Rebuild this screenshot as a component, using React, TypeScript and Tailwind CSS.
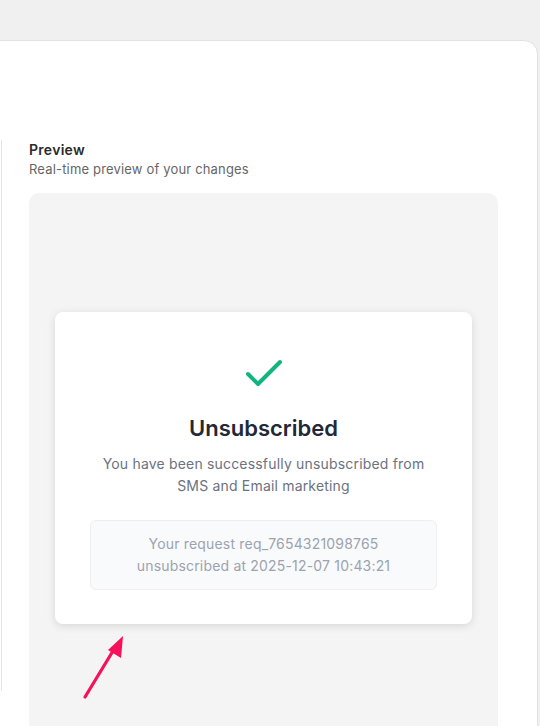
import React from "react";

// ---------------- UNSUBSCRIBE PREVIEW ----------------
const App: React.FC = () => {
  return (
    <div
      className="relative h-[726px] w-[540px] overflow-hidden bg-[#f0f0f0] pt-[40px] pr-[2px]"
      style={{ fontFamily: "Inter, 'Noto Sans', sans-serif" }}
    >
      {/* settings panel, left part is cut off */}
      <div className="ml-[-20px] h-[720px] rounded-tr-[14px] border border-[#e2e2e2] bg-white pt-[99px]">
        <div className="flex items-start">
          <div className="h-[551px] w-[21px] shrink-0 border-r border-[#e4e4e4]"></div>

          <div className="flex-1 pl-[27px] pr-[39px]">
            <h3 className="text-[14px] font-semibold leading-[20px] tracking-[0.02em] text-[#2b2b2b]">
              Preview
            </h3>
            <p className="text-[13px] leading-[18px] tracking-[0.013em] text-[#666666]">
              Real-time preview of your changes
            </p>

            {/* preview canvas */}
            <div className="mt-[15px] flex h-[560px] items-start rounded-[10px] bg-[#f4f4f4] px-[26px] pt-[119px]">
              <div className="w-full rounded-[8px] bg-white px-[35px] pt-[38px] pb-[34px] text-center shadow-[0_2px_8px_rgba(0,0,0,0.12)]">
                <svg
                  width="48"
                  height="48"
                  viewBox="0 0 24 24"
                  fill="none"
                  stroke="#12b57f"
                  strokeWidth="2"
                  strokeLinecap="round"
                  strokeLinejoin="round"
                  className="mx-auto"
                >
                  <path d="M20 6 9 17l-5-5" />
                </svg>
                <h2 className="mt-[16px] text-[22px] font-semibold leading-[28px] text-[#1f2937]">
                  Unsubscribed
                </h2>
                <p className="mt-[11px] text-[14px] leading-[22px] tracking-[0.013em] text-[#6b7280]">
                  You have been successfully unsubscribed from
                  <br />
                  SMS and Email marketing
                </p>
                <div className="mt-[23px] rounded-[6px] border border-[#eceef1] bg-[#f9fafb] py-[12px] text-[14px] leading-[22px] tracking-[0.013em] text-[#9ca3af]">
                  Your request req_7654321098765
                  <br />
                  unsubscribed at 2025-12-07 10:43:21
                </div>
              </div>
            </div>
          </div>
        </div>
      </div>

      {/* annotation arrow */}
      <svg
        className="absolute left-[78px] top-[630px]"
        width="52"
        height="74"
        viewBox="0 0 52 74"
        fill="none"
      >
        <path d="M7 67 L38 16" stroke="#f7105a" strokeWidth="3.2" strokeLinecap="round" />
        <path d="M45 6 L43 28 L30 20 Z" fill="#f7105a" />
      </svg>
    </div>
  );
};

export default App;
